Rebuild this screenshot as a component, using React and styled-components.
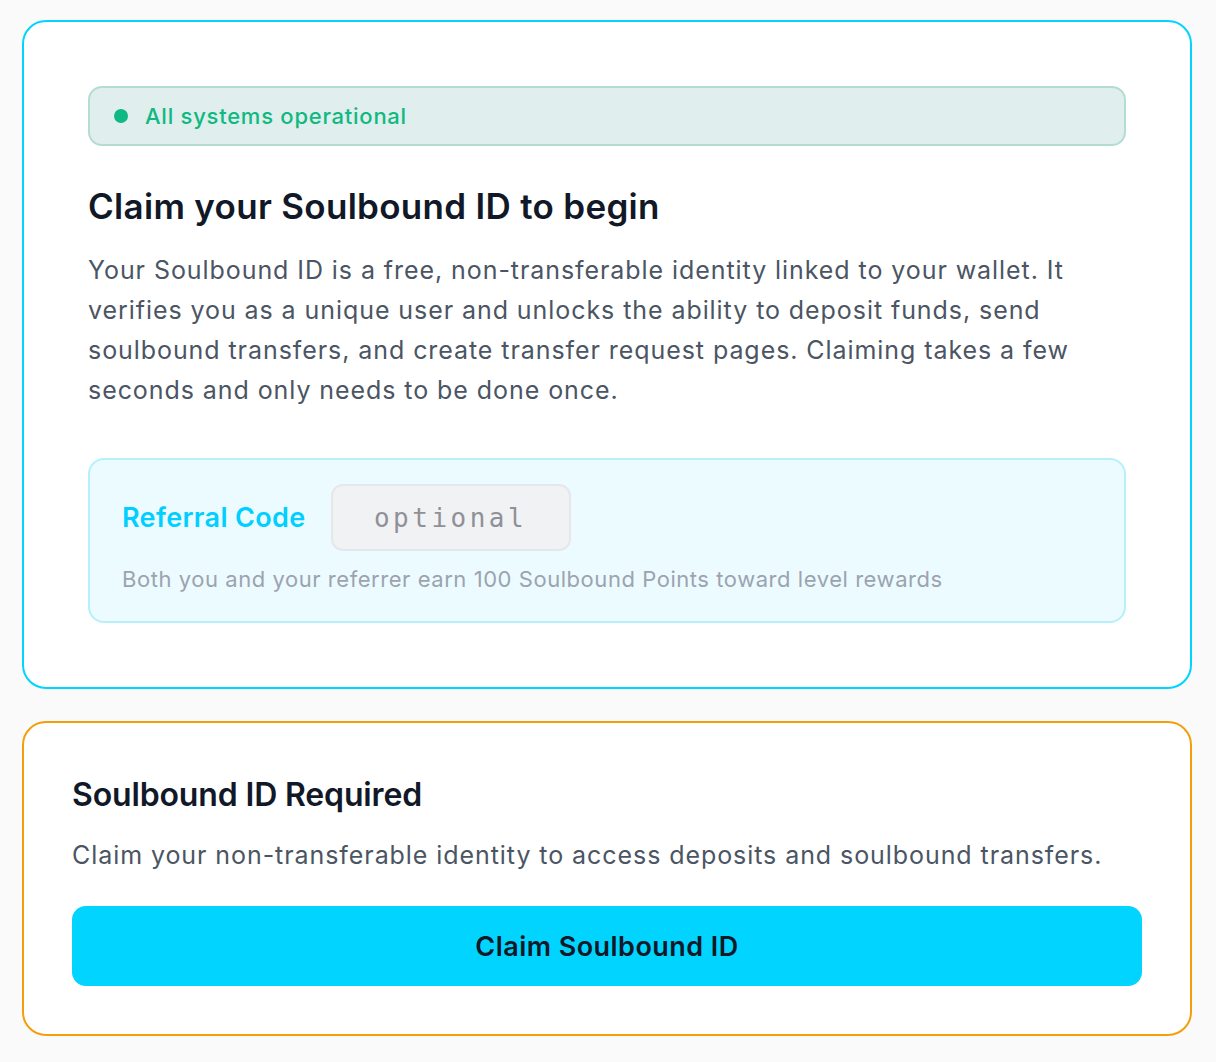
import React from "react";
import styled, { createGlobalStyle } from "styled-components";

const Global = createGlobalStyle`
  html, body { margin: 0; padding: 0; background: #fafafa; }
  body { font-family: Inter, "Noto Sans", "Liberation Sans", sans-serif; -webkit-font-smoothing: antialiased; }
  * { box-sizing: border-box; }
`;

const Page = styled.div`
  padding: 20px 24px 26px 22px;
  display: flex;
  flex-direction: column;
  gap: 32px;
`;

const Card = styled.section`
  background: #ffffff;
  border: 2px solid ${(p) => p.$accent};
  border-radius: 24px;
  padding: ${(p) => p.$pad}px;
  display: flex;
  flex-direction: column;
`;

const Status = styled.div`
  height: 60px;
  display: flex;
  align-items: center;
  gap: 17px;
  padding: 0 24px;
  background: #e0eeed;
  border: 2px solid #b3ddd3;
  border-radius: 14px;
`;

const Dot = styled.span`
  width: 14px;
  height: 14px;
  border-radius: 50%;
  background: #10b981;
`;

const StatusText = styled.span`
  font-size: 22px;
  color: #10b981;
  font-weight: 500;
  letter-spacing: 0.75px;
`;

const Title = styled.h2`
  margin: ${(p) => p.$mt}px 0 0;
  font-size: ${(p) => p.$size}px;
  line-height: ${(p) => p.$lh}px;
  letter-spacing: ${(p) => p.$ls}px;
  font-weight: 600;
  color: #111827;
`;

const Text = styled.p`
  margin: ${(p) => p.$mt}px 0 0;
  font-size: 25px;
  line-height: 40px;
  letter-spacing: 0.93px;
  color: #4b5563;
  font-weight: 400;
`;

const Referral = styled.div`
  margin-top: 48px;
  background: #ecfbff;
  border: 2px solid #b5f0fb;
  border-radius: 16px;
  padding: 24px 32px 26px;
  display: flex;
  flex-direction: column;
  gap: 12px;
`;

const Row = styled.div`
  display: flex;
  align-items: center;
  gap: 25px;
`;

const Label = styled.label`
  font-size: 27px;
  font-weight: 600;
  color: #00cfff;
  letter-spacing: 0.35px;
`;

const Input = styled.input`
  width: 240px;
  height: 67px;
  padding: 0;
  background: #f1f2f4;
  border: 2px solid #e5e7eb;
  border-radius: 12px;
  text-align: center;
  font-family: "DejaVu Sans Mono", "Liberation Mono", monospace;
  font-size: 26px;
  letter-spacing: 3.5px;
  color: #909098;
  outline: none;
  &::placeholder { color: #909098; }
`;

const Hint = styled.div`
  font-size: 22px;
  line-height: 32px;
  letter-spacing: 0.55px;
  color: #9ca3af;
`;

const Button = styled.button`
  margin-top: 31px;
  height: 80px;
  border: none;
  border-radius: 14px;
  background: #00d4ff;
  color: #111827;
  font-family: inherit;
  font-size: 27px;
  font-weight: 600;
  letter-spacing: 0.45px;
  cursor: pointer;
`;

export default function App() {
  return (
    <>
      <Global />
      <Page>
        <Card $accent="#00d4ff" $pad={64}>
          <Status>
            <Dot />
            <StatusText>All systems operational</StatusText>
          </Status>
          <Title $mt={40} $size={35} $lh={40} $ls={0.3}>Claim your Soulbound ID to begin</Title>
          <Text $mt={24}>
            Your Soulbound ID is a free, non-transferable identity linked to your wallet. It
            verifies you as a unique user and unlocks the ability to deposit funds, send
            soulbound transfers, and create transfer request pages. Claiming takes a few
            seconds and only needs to be done once.
          </Text>
          <Referral>
            <Row>
              <Label htmlFor="ref">Referral Code</Label>
              <Input id="ref" placeholder="optional" />
            </Row>
            <Hint>Both you and your referrer earn 100 Soulbound Points toward level rewards</Hint>
          </Referral>
        </Card>
        <Card $accent="#f59e0b" $pad={48}>
          <Title $mt={0} $size={32} $lh={48} $ls={-0.15}>Soulbound ID Required</Title>
          <Text $mt={16}>
            Claim your non-transferable identity to access deposits and soulbound transfers.
          </Text>
          <Button>Claim Soulbound ID</Button>
        </Card>
      </Page>
    </>
  );
}
